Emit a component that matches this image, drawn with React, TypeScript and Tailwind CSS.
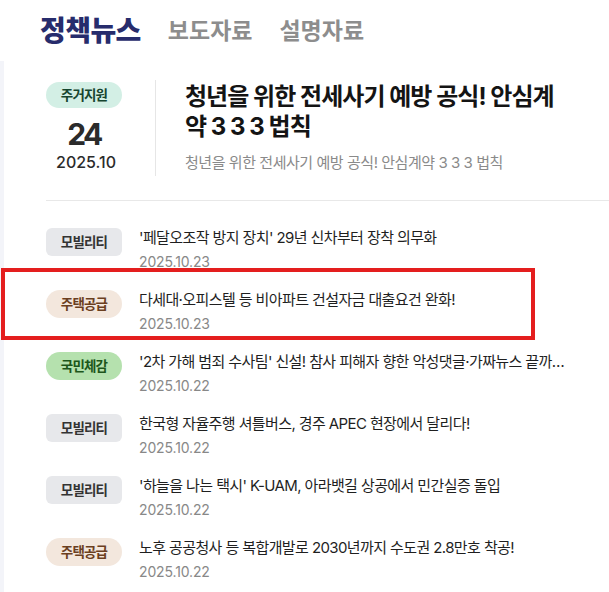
import React from "react";

type Item = {
  tag: string;
  kind: "gray" | "beige" | "green";
  title: string;
  date: string;
};

const items: Item[] = [
  { tag: "모빌리티", kind: "gray", title: "'페달오조작 방지 장치' 29년 신차부터 장착 의무화", date: "2025.10.23" },
  { tag: "주택공급", kind: "beige", title: "다세대·오피스텔 등 비아파트 건설자금 대출요건 완화!", date: "2025.10.23" },
  { tag: "국민체감", kind: "green", title: "'2차 가해 범죄 수사팀' 신설! 참사 피해자 향한 악성댓글·가짜뉴스 끝까지 추적", date: "2025.10.22" },
  { tag: "모빌리티", kind: "gray", title: "한국형 자율주행 셔틀버스, 경주 APEC 현장에서 달리다!", date: "2025.10.22" },
  { tag: "모빌리티", kind: "gray", title: "'하늘을 나는 택시' K-UAM, 아라뱃길 상공에서 민간실증 돌입", date: "2025.10.22" },
  { tag: "주택공급", kind: "beige", title: "노후 공공청사 등 복합개발로 2030년까지 수도권 2.8만호 착공!", date: "2025.10.22" },
];

function Badge({ tag, kind }: { tag: string; kind: Item["kind"] }) {
  const cls =
    kind === "gray"
      ? "rounded-[6px] bg-[#e7e8eb] text-[#333333]"
      : kind === "beige"
      ? "rounded-full bg-[#f3e7dd] text-[#6b3f1f]"
      : "rounded-full bg-[#b5e1ae] text-[#1d561b]";
  return (
    <div
      className={`${cls} w-[76px] h-[28px] shrink-0 flex items-center justify-center text-[13.5px] font-bold tracking-[-0.06em] mt-[1px]`}
    >
      {tag}
    </div>
  );
}

export default function App() {
  return (
    <div className="relative w-[609px] h-[592px] overflow-hidden bg-white font-[Inter,'Noto_Sans_CJK_KR',sans-serif]">
      <header className="h-[61px] flex items-center pl-[40px] gap-[27px]">
        <span className="text-[28px] font-extrabold text-[#272c6c] tracking-[-0.02em]">정책뉴스</span>
        <span className="text-[23px] font-bold text-[#8d8d8d] mt-[2px]">보도자료</span>
        <span className="text-[23px] font-bold text-[#8d8d8d] mt-[2px]">설명자료</span>
      </header>

      <div className="flex h-[531px]">
        <div className="w-[4px] shrink-0 bg-[#f3f4f9]" />
        <div className="flex-1 min-w-0 pl-[42px]">
          <section className="flex pt-[19px]">
            <div className="w-[76px] shrink-0 flex flex-col items-center">
              <div className="mt-[2px] w-[76px] h-[26px] rounded-full bg-[#d3efe5] text-[#16452f] text-[13.5px] font-bold tracking-[-0.06em] flex items-center justify-center">
                주거지원
              </div>
              <div className="mt-[10px] text-[30px] leading-[32px] font-bold tracking-[-0.09em] text-[#2b2b2b]">24</div>
              <div className="mt-[2px] text-[16px] leading-[20px] font-medium text-[#2b2b2b] pl-[4px]">2025.10</div>
            </div>
            <div className="flex-1 min-w-0 ml-[33px] border-l border-[#e6e6e6] pl-[29px] pt-[2px] pb-[2px] pr-[44px]">
              <h2 className="text-[24px] leading-[30px] font-bold text-[#141414] tracking-[-0.04em]">
                청년을 위한 전세사기 예방 공식! 안심계약 3 3 3 법칙
              </h2>
              <p className="mt-[10px] text-[15px] leading-[22px] text-[#8a8a8a] tracking-[-0.03em]">
                청년을 위한 전세사기 예방 공식! 안심계약 3 3 3 법칙
              </p>
            </div>
          </section>

          <div className="mt-[24px] border-t border-[#e8e8e8]" />

          <ul className="pt-[26px] pr-[41px]">
            {items.map((it, i) => (
              <li key={i} className="h-[62px] flex items-start gap-[17px]">
                <Badge tag={it.tag} kind={it.kind} />
                <div className="min-w-0 flex-1">
                  <div className="truncate text-[15px] leading-[22px] text-[#1f1f1f] tracking-[-0.04em]">{it.title}</div>
                  <div className="mt-[3px] text-[14px] leading-[20px] text-[#888888] tracking-[-0.01em]">{it.date}</div>
                </div>
              </li>
            ))}
          </ul>
        </div>
      </div>

      <div className="absolute left-[1px] top-[268px] w-[534px] h-[72px] border-4 border-[#e41e1e] pointer-events-none" />
    </div>
  );
}
